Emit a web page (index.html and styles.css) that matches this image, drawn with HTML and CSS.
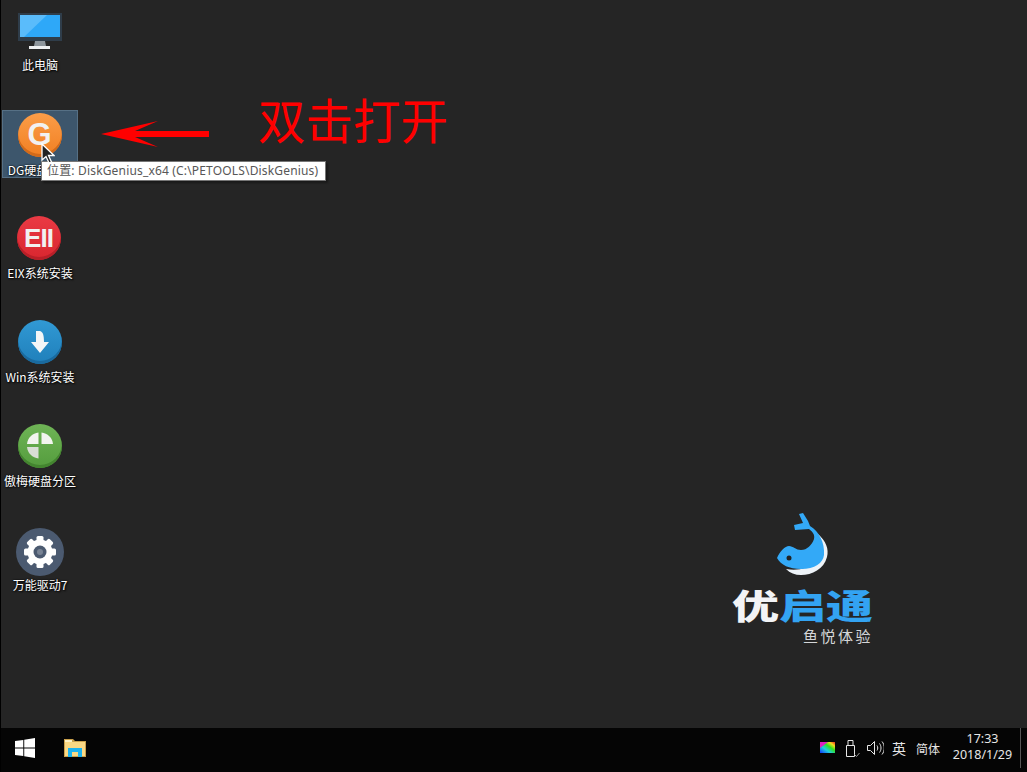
FILE: index.html
```html
<!DOCTYPE html>
<html lang="zh-CN">
<head>
    <meta charset="UTF-8">
    <meta name="viewport" content="width=device-width, initial-scale=1.0">
    <title>优启通桌面</title>
    <link rel="stylesheet" href="styles.css">
</head>
<body>
    <div class="screen">
        <main class="desktop">
            <div class="icons">
                <div class="item">
                    <svg class="ico" width="48" height="48" viewBox="0 0 48 48">
                        <rect x="2" y="1" width="44" height="28" fill="#2f3d4a"/>
                        <rect x="4" y="3" width="40" height="22" fill="#2ea8f8"/>
                        <path d="M4 3h27L8 25H4z" fill="#5abcfb"/>
                        <path d="M19 29h10l1 5H18z" fill="#8d959b"/>
                        <path d="M13 34h21v3H13z" fill="#eef0f1"/>
                    </svg>
                    <span>此电脑</span>
                </div>
                <div class="item selected">
                    <div class="disc orange"><b>G</b></div>
                    <span>DG硬盘分区</span>
                </div>
                <div class="item">
                    <div class="disc red"><b class="eii">EII</b></div>
                    <span>EIX系统安装</span>
                </div>
                <div class="item">
                    <div class="disc blue">
                        <svg width="44" height="44" viewBox="0 0 44 44">
                            <path d="M18 11h4c3 1 4 4 4 11h5l-9 11-9-11h5z" fill="#f4f6f7"/>
                        </svg>
                    </div>
                    <span>Win系统安装</span>
                </div>
                <div class="item">
                    <div class="disc green">
                        <svg width="44" height="44" viewBox="0 0 44 44">
                            <path d="M23.500 8.500c6 .5 11 5.500 11.500 11.500H23.500z" fill="#f2f4ee"/>
                            <path d="M20.500 8.500V20H9c.5-6 5.500-11 11.500-11.500z" fill="#f2f4ee"/>
                            <path d="M20.500 23v11.500C14.500 34 9.500 29 9 23z" fill="#d9ded5"/>
                        </svg>
                    </div>
                    <span>傲梅硬盘分区</span>
                </div>
                <div class="item">
                    <div class="disc slate">
                        <svg width="48" height="48" viewBox="0 0 48 48">
                            <g fill="#fff">
                                <circle cx="24" cy="24" r="12.500"/>
                                <rect x="20.500" y="8" width="7" height="32" rx="1.500"/>
                                <rect x="20.500" y="8" width="7" height="32" rx="1.500" transform="rotate(45 24 24)"/>
                                <rect x="20.500" y="8" width="7" height="32" rx="1.500" transform="rotate(90 24 24)"/>
                                <rect x="20.500" y="8" width="7" height="32" rx="1.500" transform="rotate(135 24 24)"/>
                            </g>
                            <circle cx="24" cy="24" r="6.500" fill="#4b5a70"/>
                            <circle cx="24" cy="24" r="3" fill="#fff" opacity=".25"/>
                        </svg>
                    </div>
                    <span>万能驱动7</span>
                </div>
            </div>

            <div class="note">
                <svg class="arrow" width="108" height="28" viewBox="0 0 108 28">
                    <path d="M0 14 57 1 34 11h74v6H34l23 10z" fill="#f00"/>
                </svg>
                <span>双击打开</span>
            </div>

            <div class="tooltip">位置: DiskGenius_x64 (C:\PETOOLS\DiskGenius)</div>

            <svg class="cursor" width="14" height="22" viewBox="0 0 14 22">
                <path d="M1 1v16l4-3.500 3 6.500 2.500-1-3-6.500H13z" fill="#222" stroke="#fff" stroke-width="1.300"/>
            </svg>

            <div class="brand">
                <svg width="52" height="62" viewBox="0 0 52 62">
                    <path d="M41 21C49 28 52 36 50 44 47 56 35 62 24 62 18 62 13 60 9 56 30 60 48 48 41 21z" fill="#eef3f8"/>
                    <path d="M0 45C3 38 8 33 12 33 16 33 19 37 24 37 30 37 35 32 37 26 38 22 36 19 32 16L18 17 17 12 26 10 22 1 26 0 31 8 33 13C42 18 48 30 47 42 46 50 38 56 24 56 12 56 4 52 0 45z" fill="#33a9f7"/>
                    <circle cx="12" cy="45" r="2.500" fill="#222"/>
                </svg>
                <div class="brand-name"><i>优</i>启通</div>
                <div class="brand-sub">鱼悦体验</div>
            </div>
        </main>

        <footer class="taskbar">
            <svg class="start" width="20" height="20" viewBox="0 0 21 21">
                <path d="M0 3.200 8.700 2v8H0zM9.700 1.800 21 0v10H9.700zM0 11h8.700v8L0 17.800zM9.700 11H21v10L9.700 19.200z" fill="#fff"/>
            </svg>
            <svg class="folder" width="22" height="18" viewBox="0 0 22 18">
                <path d="M0 0h9l2 2h11v16H0z" fill="#c9a04c"/>
                <path d="M1 3h20v14H1z" fill="#fbd984"/>
                <path d="M1 1h7v2H1z" fill="#fff2c4"/>
                <path d="M4 9h14v9h-4v-5H8v5H4z" fill="#1fb3ee"/>
            </svg>
            <div class="tray">
                <svg class="tray-color" width="15" height="13" viewBox="0 0 15 13">
                    <defs>
                        <linearGradient id="hue" x1="0" y1="1" x2="1" y2="0">
                            <stop offset="0" stop-color="#1030ff"/>
                            <stop offset=".35" stop-color="#20d0e0"/>
                            <stop offset=".6" stop-color="#30e020"/>
                            <stop offset=".8" stop-color="#f0e020"/>
                            <stop offset="1" stop-color="#f02020"/>
                        </linearGradient>
                    </defs>
                    <rect width="15" height="11" fill="url(#hue)"/>
                    <path d="M0 0h8L0 6z" fill="#e020c0"/>
                </svg>
                <svg class="tray-usb" width="15" height="17" viewBox="0 0 15 17">
                    <path d="M.5 5.500h8v11h-8zM2 5.500v-5h5v5" fill="none" stroke="#e6e6e6"/>
                    <path d="M8.500 14.500l2 2 3-3.500" fill="none" stroke="#999"/>
                </svg>
                <svg class="tray-sound" width="17" height="16" viewBox="0 0 17 16">
                    <path d="M.5 5.500h3l4-4v13l-4-4h-3z" fill="none" stroke="#e6e6e6"/>
                    <path d="M10 5.500c1 1.500 1 3.500 0 5M12.500 3.500c2 2.500 2 6.500 0 9M15 1.500c3 3.500 3 9.500 0 13" fill="none" stroke="#e6e6e6"/>
                </svg>
                <span class="ime">英</span>
                <span class="ime-mode">简体</span>
                <div class="clock">
                    <span>17:33</span>
                    <span>2018/1/29</span>
                </div>
                <div class="show-desktop"></div>
            </div>
        </footer>
    </div>
</body>
</html>
```

FILE: styles.css
```css
* {
    box-sizing: border-box;
}

html, body {
    margin: 0;
    height: 100%;
    overflow: hidden;
    background: #000;
}

body {
    font-family: "Noto Sans CJK SC", "Noto Sans", sans-serif;
    font-size: 12px;
    color: #fff;
}

.screen {
    width: 1027px;
    height: 772px;
    display: flex;
    flex-direction: column;
    padding-left: 1px;
}

.desktop {
    position: relative;
    flex: 1;
    background: #252525;
}

.icons {
    display: grid;
    grid-template-rows: repeat(6, 68px);
    row-gap: 36px;
    width: 76px;
    margin: 6px 0 0 1px;
}

.item {
    display: grid;
    grid-template-rows: 49px 16px;
    justify-items: center;
    padding-top: 1px;
    border: 1px solid transparent;
    white-space: nowrap;
}

.item span {
    line-height: 16px;
    text-shadow: 1px 1px 2px #000, 0 0 2px #000;
}

.selected {
    padding-top: 2px;
    background: #3d566c;
    border-color: #567085;
}

.ico {
    display: block;
    margin-top: 4px;
}

.disc {
    width: 44px;
    height: 44px;
    margin-right: 1px;
    border-radius: 50%;
    display: flex;
    align-items: center;
    justify-content: center;
}

.disc b {
    font-family: "Liberation Sans", sans-serif;
    color: #f1f1f1;
}

.orange {
    background: linear-gradient(#fb9d48, #f17f22);
    box-shadow: inset 0 -3px 0 #d26a1a;
}

.orange b {
    font-size: 31px;
    font-weight: 700;
}

.red {
    margin-right: 3px;
    background: linear-gradient(#ea3a44, #d8262f);
    box-shadow: inset 0 -3px 0 #b81f28;
}

.red b.eii {
    font-size: 26px;
    font-weight: 700;
    letter-spacing: -1px;
}

.blue {
    background: linear-gradient(#3199d4, #1f7fba);
    box-shadow: inset 0 -3px 0 #1a6a9e;
}

.green {
    background: linear-gradient(#6fb456, #549c3d);
    box-shadow: inset 0 -3px 0 #43852f;
}

.slate {
    width: 48px;
    height: 48px;
    margin-right: 0;
    background: #4b5a70;
}

.note {
    position: absolute;
    left: 100px;
    top: 89px;
    display: flex;
    align-items: flex-start;
    gap: 49px;
    color: #f00;
}

.arrow {
    margin-top: 31px;
}

.note span {
    font-size: 47.500px;
    line-height: 60px;
}

.tooltip {
    position: absolute;
    left: 40px;
    top: 161px;
    width: 285px;
    height: 20px;
    padding-left: 5px;
    background: #fff;
    border: 1px solid #767676;
    color: #575757;
    font-family: "Noto Sans", "Noto Sans CJK SC", sans-serif;
    font-size: 12px;
    letter-spacing: 0.170px;
    line-height: 18px;
    white-space: nowrap;
    box-shadow: 2px 2px 2px rgba(0, 0, 0, 0.35);
}

.cursor {
    position: absolute;
    left: 40px;
    top: 143px;
}

.brand {
    position: absolute;
    left: 731px;
    top: 513px;
    width: 142px;
    display: flex;
    flex-direction: column;
}

.brand svg {
    margin-left: 45px;
}

.brand-name {
    margin-top: 13px;
    font-size: 47px;
    font-weight: 900;
    line-height: 33px;
    color: #33a3f2;
    white-space: nowrap;
    transform: scaleY(0.72);
}

.brand-name i {
    font-style: normal;
    color: #f3f4f6;
}

.brand-sub {
    align-self: flex-end;
    margin: 7px 1px 0 0;
    font-size: 15px;
    line-height: 16px;
    letter-spacing: 2.500px;
    color: #d4d6d8;
}

.taskbar {
    height: 44px;
    display: flex;
    align-items: center;
    background: #050505;
    padding-bottom: 4px;
}

.start {
    margin-left: 14px;
}

.folder {
    margin-left: 29px;
}

.tray {
    margin-left: auto;
    display: flex;
    align-items: center;
    height: 40px;
    color: #e6e6e6;
}

.tray-usb {
    margin-left: 11px;
}

.tray-sound {
    margin-left: 6px;
}

.ime {
    margin-left: 8px;
    font-size: 14px;
}

.ime-mode {
    margin-left: 10px;
    font-size: 12px;
}

.clock {
    display: flex;
    flex-direction: column;
    align-items: center;
    width: 75px;
    margin: 0 0 2px 5px;
    font-family: "Noto Sans", sans-serif;
    font-size: 12.500px;
    line-height: 16px;
}

.show-desktop {
    width: 1px;
    height: 40px;
    margin-right: 6px;
    background: #555;
}
```
